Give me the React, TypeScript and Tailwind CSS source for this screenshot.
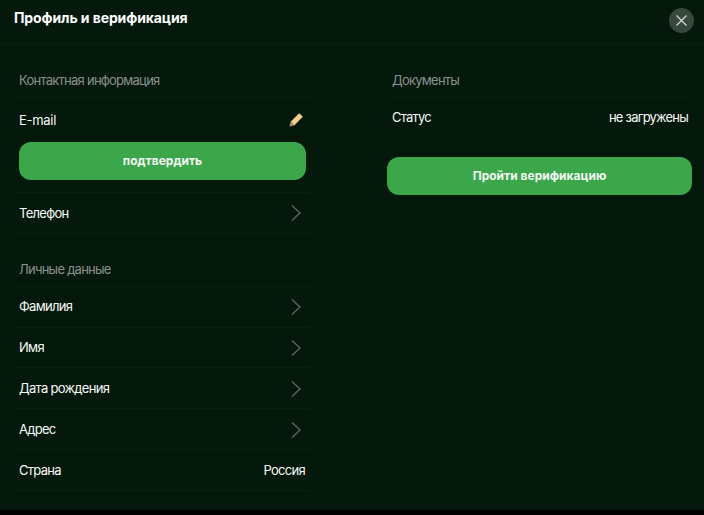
import React from "react";

const Chevron = () => (
  <svg width="12" height="18" viewBox="0 0 12 18" fill="none" stroke="#5a665d" strokeWidth="1.4" className="mr-[3px]">
    <path d="M2 1.5 L10 9 L2 16.5" />
  </svg>
);

const Pencil = () => (
  <svg width="14" height="14" viewBox="0 0 14 14" className="mr-[2px]">
    <path d="M10.2 0.2 L13.8 3.8 L5.2 12.4 L1.6 8.8 Z" fill="#f1cf8b" />
    <path d="M1.6 8.8 L5.2 12.4 L0.4 13.6 Z" fill="#a89466" />
  </svg>
);

const Row = ({ label, value, arrow }: { label: string; value?: string; arrow?: boolean }) => (
  <div className="flex h-[40.8px] items-center justify-between border-b border-[#0b2012] px-[5px] pt-[1px] text-[13px] tracking-[-0.7px] text-[#f7f9f7]">
    <span>{label}</span>
    {value && <span>{value}</span>}
    {arrow && <Chevron />}
  </div>
);

const SectionTitle = ({ children }: { children: React.ReactNode }) => (
  <div className="flex h-[36px] items-center border-b border-[#0b2012] pl-[5px] pt-[2px] text-[13px] tracking-[-0.75px] text-[#8a928c]">
    {children}
  </div>
);

export default function App() {
  return (
    <div className="h-[515px] w-[704px] overflow-hidden bg-black font-['Inter','Liberation_Sans',sans-serif]">
      <div className="h-[510px] bg-[#04190b]">
        <div className="flex h-[45px] items-start justify-between border-b border-[#0a1f11] pl-[14px] pr-[10px] pt-[8px]">
          <h1 className="text-[14px] leading-[20px] font-bold tracking-[-0.1px] text-white">Профиль и верификация</h1>
          <button className="flex h-[25px] w-[25px] items-center justify-center rounded-full bg-[#37493d]">
            <svg width="11" height="11" viewBox="0 0 11 11" stroke="#d5dbd6" strokeWidth="1.2" fill="none">
              <path d="M0.5 0.5 L10.5 10.5 M10.5 0.5 L0.5 10.5" />
            </svg>
          </button>
        </div>
        <div className="flex pl-[14px] pr-[12px] pt-[17px]">
          <div className="w-[296px]">
            <SectionTitle>Контактная информация</SectionTitle>
            <div className="border-b border-[#0b2012] px-[5px] pb-[12.5px]">
              <div className="flex h-[44px] items-center justify-between pt-[2px] text-[13px] tracking-[-0.3px] text-[#f7f9f7]">
                <span>E-mail</span>
                <span className="-mt-[2px]">
                  <Pencil />
                </span>
              </div>
              <button className="block h-[37.5px] w-[287px] rounded-[12px] bg-[#3ba74a] text-[12px] font-bold text-[#f2f7f2]">
                подтвердить
              </button>
            </div>
            <Row label="Телефон" arrow />
            <div className="mt-[17px]">
              <SectionTitle>Личные данные</SectionTitle>
              <Row label="Фамилия" arrow />
              <Row label="Имя" arrow />
              <Row label="Дата рождения" arrow />
              <Row label="Адрес" arrow />
              <Row label="Страна" value="Россия" />
            </div>
          </div>
          <div className="ml-[77px] flex-1">
            <SectionTitle>Документы</SectionTitle>
            <div className="flex h-[40px] items-center justify-between pl-[5px] pr-[4px] text-[13px] tracking-[-0.8px] text-[#f7f9f7]">
              <span>Статус</span>
              <span>не загружены</span>
            </div>
            <button className="mt-[19px] block h-[37.5px] w-full rounded-[12px] bg-[#3ba74a] text-[12px] font-bold text-[#f2f7f2]">
              Пройти верификацию
            </button>
          </div>
        </div>
      </div>
    </div>
  );
}
